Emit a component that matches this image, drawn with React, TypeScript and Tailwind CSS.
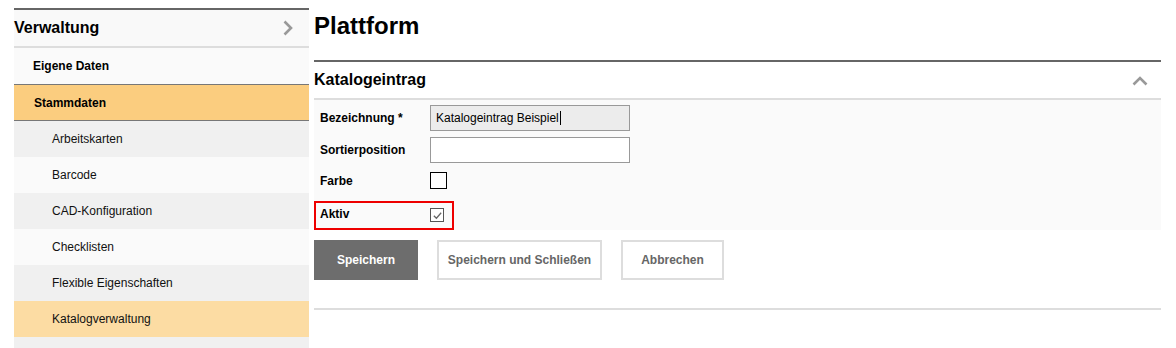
const subItems = [
  { label: "Arbeitskarten", bg: "bg-[#f0f0f0]" },
  { label: "Barcode", bg: "bg-[#fafafa]" },
  { label: "CAD-Konfiguration", bg: "bg-[#f0f0f0]" },
  { label: "Checklisten", bg: "bg-[#fafafa]" },
  { label: "Flexible Eigenschaften", bg: "bg-[#f0f0f0]" },
  { label: "Katalogverwaltung", bg: "bg-[#fcdca3]" },
  { label: "", bg: "bg-[#f0f0f0]" },
];

export default function App() {
  return (
    <div
      className="w-[1176px] h-[348px] overflow-hidden bg-white text-black flex gap-[5px] pl-[14px] pr-[15px]"
      style={{ fontFamily: '"Liberation Sans", Arial, sans-serif' }}
    >
      {/* Sidebar */}
      <aside className="w-[295px] pt-[8px] flex flex-col">
        <div className="shrink-0 border-t-2 border-[#666] bg-[#f9f9f9] h-[40px] flex items-center justify-between pr-[16px] border-b-2 border-b-[#ddd]">
          <span className="text-[16px] font-bold">Verwaltung</span>
          <svg viewBox="0 0 10 16" className="w-[10px] h-[16px]">
            <path d="M1.5 1.5 L8 8 L1.5 14.5" fill="none" stroke="#999" strokeWidth="2.6" />
          </svg>
        </div>
        <div className="shrink-0 h-[37px] bg-[#fafafa] border-b border-[#777] flex items-center pl-[19px] text-[12px] font-bold">
          Eigene Daten
        </div>
        <div className="shrink-0 h-[36px] bg-[#fbcd7f] border-b border-[#777] flex items-center pl-[20px] text-[12px] font-bold">
          Stammdaten
        </div>
        {subItems.map((item, i) => (
          <div
            key={i}
            className={`h-[36px] shrink-0 ${item.bg} flex items-center pl-[38px] text-[12px] text-[#111]`}
          >
            {item.label}
          </div>
        ))}
      </aside>

      {/* Main */}
      <main className="flex-1 flex flex-col">
        <h1 className="h-[52px] pt-[12px] text-[24px] font-bold leading-[28px]">Plattform</h1>
        <div className="mt-[8px] border-t-2 border-[#666] h-[36px] flex items-center justify-between pr-[13px] border-b-2 border-b-[#ddd] box-content">
          <span className="text-[16px] font-bold">Katalogeintrag</span>
          <svg viewBox="0 0 16 10" className="w-[16px] h-[10px] mt-[1px]">
            <path d="M1.5 8.5 L8 2 L14.5 8.5" fill="none" stroke="#999" strokeWidth="2.6" />
          </svg>
        </div>

        <div className="bg-[#fafafa] pt-[5px] flex flex-col">
          <div className="h-[32px] flex items-start">
            <label className="w-[116px] h-[26px] pl-[6px] flex items-center text-[12px] font-bold">Bezeichnung *</label>
            <div className="w-[200px] h-[26px] border border-[#999] bg-[#ececec] flex items-center px-[5px] text-[12px]">
              Katalogeintrag Beispiel<span className="w-px h-[14px] bg-black ml-px" />
            </div>
          </div>
          <div className="h-[32px] flex items-start">
            <label className="w-[116px] h-[26px] pl-[6px] flex items-center text-[12px] font-bold">Sortierposition</label>
            <div className="w-[200px] h-[26px] border border-[#999] bg-white" />
          </div>
          <div className="h-[32px] flex items-start pt-[3px]">
            <label className="w-[116px] h-[17px] pl-[6px] flex items-center text-[12px] font-bold">Farbe</label>
            <div className="w-[17px] h-[17px] border border-black bg-white" />
          </div>
          <div className="w-[140px] h-[29px] border-2 border-[#e00] flex items-start">
            <label className="w-[114px] pl-[4px] pt-[2px] text-[12px] font-bold">Aktiv</label>
            <div className="mt-[5px] w-[14px] h-[14px] border border-[#555] bg-white flex items-center justify-center">
              <svg viewBox="0 0 12 12" className="w-[11px] h-[11px]">
                <path d="M2 6.2 L4.8 9 L10 3" fill="none" stroke="#666" strokeWidth="1.4" />
              </svg>
            </div>
          </div>
        </div>

        <div className="mt-[10px] flex gap-[19px]">
          <button className="w-[104px] h-[40px] bg-[#6d6d6d] text-white text-[12px] font-bold">Speichern</button>
          <button className="w-[165px] h-[40px] border-2 border-[#ddd] bg-white text-[#666] text-[12px] font-bold">
            Speichern und Schließen
          </button>
          <button className="w-[103px] h-[40px] border-2 border-[#ddd] bg-white text-[#666] text-[12px] font-bold">
            Abbrechen
          </button>
        </div>

        <div className="mt-[28px] border-t-2 border-[#ddd]" />
      </main>
    </div>
  );
}
